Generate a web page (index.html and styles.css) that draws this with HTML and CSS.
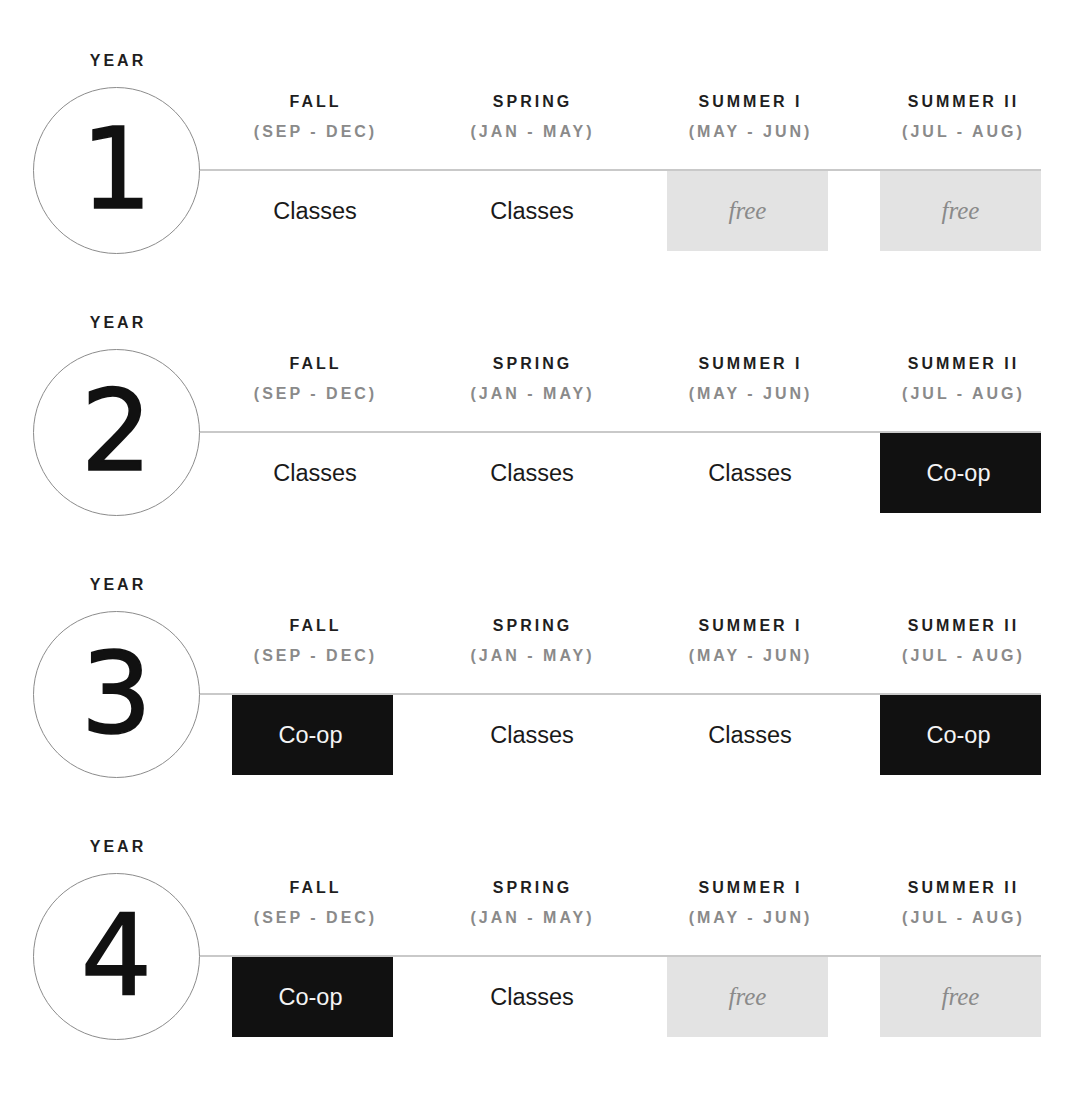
FILE: index.html
```html
<!DOCTYPE html>
<html>
<head>
<meta charset="utf-8">
<link rel="stylesheet" href="styles.css">
</head>
<body>
<main class="plan">
  <section class="year">
    <div class="year-id">
      <div class="year-label">YEAR</div>
      <div class="circle">1</div>
    </div>
    <div class="schedule">
      <div class="terms">
        <div class="term"><div class="term-name">FALL</div><div class="term-dates">(SEP - DEC)</div></div>
        <div class="term"><div class="term-name">SPRING</div><div class="term-dates">(JAN - MAY)</div></div>
        <div class="term"><div class="term-name">SUMMER I</div><div class="term-dates">(MAY - JUN)</div></div>
        <div class="term"><div class="term-name">SUMMER II</div><div class="term-dates">(JUL - AUG)</div></div>
      </div>
      <div class="cells">
        <div class="cell">Classes</div>
        <div class="cell">Classes</div>
        <div class="cell free">free</div>
        <div class="cell free">free</div>
      </div>
    </div>
  </section>

  <section class="year">
    <div class="year-id">
      <div class="year-label">YEAR</div>
      <div class="circle">2</div>
    </div>
    <div class="schedule">
      <div class="terms">
        <div class="term"><div class="term-name">FALL</div><div class="term-dates">(SEP - DEC)</div></div>
        <div class="term"><div class="term-name">SPRING</div><div class="term-dates">(JAN - MAY)</div></div>
        <div class="term"><div class="term-name">SUMMER I</div><div class="term-dates">(MAY - JUN)</div></div>
        <div class="term"><div class="term-name">SUMMER II</div><div class="term-dates">(JUL - AUG)</div></div>
      </div>
      <div class="cells">
        <div class="cell">Classes</div>
        <div class="cell">Classes</div>
        <div class="cell">Classes</div>
        <div class="cell coop">Co-op</div>
      </div>
    </div>
  </section>

  <section class="year">
    <div class="year-id">
      <div class="year-label">YEAR</div>
      <div class="circle">3</div>
    </div>
    <div class="schedule">
      <div class="terms">
        <div class="term"><div class="term-name">FALL</div><div class="term-dates">(SEP - DEC)</div></div>
        <div class="term"><div class="term-name">SPRING</div><div class="term-dates">(JAN - MAY)</div></div>
        <div class="term"><div class="term-name">SUMMER I</div><div class="term-dates">(MAY - JUN)</div></div>
        <div class="term"><div class="term-name">SUMMER II</div><div class="term-dates">(JUL - AUG)</div></div>
      </div>
      <div class="cells">
        <div class="cell coop">Co-op</div>
        <div class="cell">Classes</div>
        <div class="cell">Classes</div>
        <div class="cell coop">Co-op</div>
      </div>
    </div>
  </section>

  <section class="year">
    <div class="year-id">
      <div class="year-label">YEAR</div>
      <div class="circle">4</div>
    </div>
    <div class="schedule">
      <div class="terms">
        <div class="term"><div class="term-name">FALL</div><div class="term-dates">(SEP - DEC)</div></div>
        <div class="term"><div class="term-name">SPRING</div><div class="term-dates">(JAN - MAY)</div></div>
        <div class="term"><div class="term-name">SUMMER I</div><div class="term-dates">(MAY - JUN)</div></div>
        <div class="term"><div class="term-name">SUMMER II</div><div class="term-dates">(JUL - AUG)</div></div>
      </div>
      <div class="cells">
        <div class="cell coop">Co-op</div>
        <div class="cell">Classes</div>
        <div class="cell free">free</div>
        <div class="cell free">free</div>
      </div>
    </div>
  </section>
</main>
</body>
</html>
```

FILE: styles.css
```css
html, body {
  margin: 0;
  padding: 0;
  background: #ffffff;
}

body {
  font-family: "Liberation Sans", Arial, sans-serif;
  color: #1a1a1a;
}

.plan {
  display: flex;
  flex-direction: column;
  gap: 59px;
  padding: 51px 0 0 33px;
}

.year {
  display: flex;
  align-items: flex-start;
}

.year-id {
  display: flex;
  flex-direction: column;
  align-items: center;
  width: 167px;
}

.year-label {
  font-weight: bold;
  font-size: 16px;
  line-height: 20px;
  letter-spacing: 3px;
  padding-left: 3px;
  color: #1e1e1e;
  margin-bottom: 16px;
}

.circle {
  box-sizing: border-box;
  width: 167px;
  height: 167px;
  border: 1px solid #8c8c8c;
  border-radius: 50%;
  display: flex;
  align-items: center;
  justify-content: center;
  font-family: "DejaVu Sans", sans-serif;
  font-size: 112px;
  line-height: 1;
  color: #111111;
  -webkit-text-stroke: 1.6px #111111;
  padding-bottom: 4px;
}

.schedule {
  width: 841px;
  padding-top: 36px;
}

.terms,
.cells {
  display: grid;
  grid-template-columns: 217px 218px 213px 161px;
  padding-left: 32px;
}

.terms {
  margin-bottom: 22px;
}

.term {
  width: 161px;
  text-align: center;
  font-weight: bold;
  font-size: 16px;
  line-height: 30px;
  letter-spacing: 3px;
  padding-left: 6px;
  box-sizing: border-box;
}

.term-name {
  color: #1e1e1e;
}

.term-dates {
  color: #8a8a8a;
}

.cells {
  border-top: 2px solid #c9c9c9;
}

.cell {
  width: 161px;
  height: 80px;
  box-sizing: border-box;
  display: flex;
  align-items: center;
  justify-content: center;
  font-size: 23.5px;
  color: #1a1a1a;
  padding-left: 5px;
}

.cell.free {
  background: #e3e3e3;
  font-family: "Liberation Serif", "Times New Roman", serif;
  font-style: italic;
  font-size: 25px;
  color: #8a8a8a;
  padding-left: 0;
}

.cell.coop {
  background: #111111;
  color: #f4f4f4;
  padding-left: 0;
  padding-right: 4px;
}
```
